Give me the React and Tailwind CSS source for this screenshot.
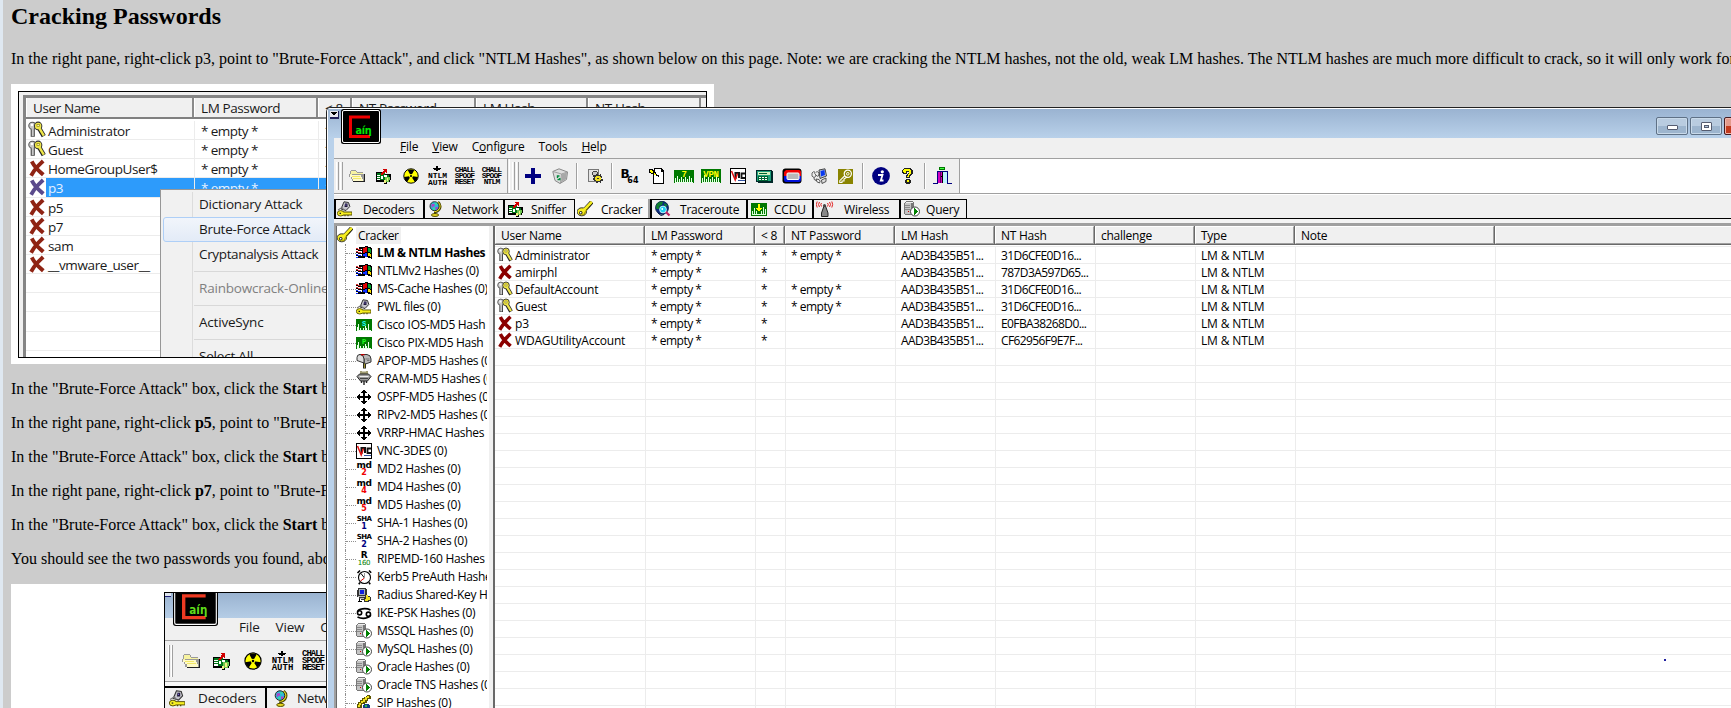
import React from "react";

const UI = "font-['Open_Sans','Noto_Sans',sans-serif] text-[12px] tracking-[-0.3px] text-black whitespace-nowrap";

function Svg({ s = 16, w, h, vb = "0 0 16 16", cls = "", children }) {
  return (
    <svg width={w || s} height={h || s} viewBox={vb} shapeRendering="crispEdges" className={"shrink-0 block " + cls}>
      {children}
    </svg>
  );
}
function Soft({ s = 16, w, h, vb = "0 0 16 16", children }) {
  return (
    <svg width={w || s} height={h || s} viewBox={vb} fill="none" className="shrink-0 block">
      {children}
    </svg>
  );
}

/* ---------- icons ---------- */
const Key = ({ s }) => (
  <Soft s={s}>
    <path d="M8 8.500L14.800 1" stroke="#111" strokeWidth="4.200" />
    <ellipse cx="4.800" cy="10.800" rx="4.700" ry="4" fill="#f6ee20" stroke="#333" strokeWidth="1" />
    <path d="M6.500 9.500L14.800 .8" stroke="#f6ee20" strokeWidth="2.600" />
    <path d="M7.500 11.500L12 6.500M5 14Q7.500 13.500 8.500 11" stroke="#a89a00" strokeWidth="1" />
    <rect x="2.500" y="10.500" width="2.500" height="2.500" rx="1" fill="#fff" stroke="#111" />
  </Soft>
);
const Keys = ({ s }) => (
  <Soft s={s}>
    <path d="M4.200 6.500V14" stroke="#333" strokeWidth="3.600" />
    <circle cx="3.800" cy="4.200" r="3.100" fill="#c8c8c8" stroke="#555" strokeWidth=".9" />
    <path d="M4.200 6V13.500" stroke="#c8c8c8" strokeWidth="1.900" />
    <rect x="2.500" y="2.500" width="2" height="2" fill="#fff" />
    <path d="M10 6.500L14 13.500" stroke="#222" strokeWidth="4" />
    <ellipse cx="9" cy="4.400" rx="3.300" ry="3.400" fill="#efe64a" stroke="#333" strokeWidth=".9" />
    <path d="M9.500 5.500L14 13" stroke="#efe64a" strokeWidth="2.200" />
    <rect x="8" y="3" width="2" height="2" fill="#fffbd0" stroke="#8a8000" strokeWidth=".6" />
  </Soft>
);
const Cross = ({ s, c = "#8b0000" }) => (
  <Soft s={s}>
    <path d="M4.200 3.600C6 7 8.500 9.500 12.300 12.900M12.200 3C9 6 6 9 3.600 13.400" stroke={c} strokeWidth="3.500" strokeLinecap="square" />
  </Soft>
);
const Win = () => (
  <Svg>
    <path d="M6 2h3V1h3v1h3v1h1v11h-1v-1h-3v-1H9v1H6z" fill="#000" />
    <path d="M7 3h2V2h2v5H9v1H7z" fill="#e00000" />
    <path d="M12 3h2v1h1v4h-1V7h-2z" fill="#00a030" />
    <path d="M7 9h2V8h2v4H9v-1H7z" fill="#1030ff" />
    <path d="M12 8h2v1h1v3h-1v-1h-2z" fill="#ffe000" />
    <path d="M0 3h2v1H0zM2 4h3v1H2zM0 6h2v1H0zM2 7h3v1H2z" fill="#e03030" />
    <path d="M0 9h2v1H0zM2 10h3v1H2zM0 12h2v1H0z" fill="#1030ff" />
    <path d="M0 4h2v1H0zM2 5h4v1H2zM0 7h2v1H0zM2 8h4v1H2zM0 10h2v1H0zM2 11h4v2H2zM3 2h3v2H3z" fill="#000" />
  </Svg>
);
const Dec = ({ s }) => (
  <Soft s={s}>
    <path d="M7 .8L11.500 1.500L12.800 5.500L9 9.500L4 8z" fill="#c4c4cc" stroke="#333" strokeWidth="1" />
    <path d="M8 2.500h2.500v3.500H7.500z" fill="#201838" />
    <path d="M8.500 3.500h1v1h-1z" fill="#9080ff" />
    <path d="M1 9L5 6.500L7 9" stroke="#777" strokeWidth="1.200" />
    <path d="M6 12.500H15" stroke="#554e00" strokeWidth="4" />
    <ellipse cx="3.700" cy="12.300" rx="3.400" ry="2.700" fill="#f6ee20" stroke="#554e00" strokeWidth=".9" />
    <path d="M5.500 12.500H14.500" stroke="#f6ee20" strokeWidth="2.200" />
    <path d="M8 14v1.200M11 14v1.200" stroke="#554e00" strokeWidth="1.200" />
    <path d="M2.500 11.700h1.500v1.200H2.500z" fill="#222" />
  </Soft>
);
const Globe = ({ s }) => (
  <Soft s={s}>
    <path d="M11 1Q14.500 4 12.500 8Q10.500 11 7 11" stroke="#4a4400" strokeWidth="2.600" />
    <path d="M11 1.500Q14 4.500 12.300 7.500Q10.500 10.500 7 10.800" stroke="#e8d820" strokeWidth="1.300" />
    <circle cx="7.500" cy="5.200" r="4.500" fill="#2fb8d8" stroke="#222" strokeWidth=".9" />
    <path d="M4.500 3h3v2.500h-2v1h-1zM8.500 6h2.500l-1 2.500H8.500z" fill="#b040c8" />
    <path d="M8 1.800h2v2H8zM6 6.500h2v2.500H6z" fill="#38d8a0" />
    <path d="M8 11v2" stroke="#4a4400" strokeWidth="2" />
    <ellipse cx="8" cy="14" rx="3.600" ry="1.500" fill="#e8d820" stroke="#4a4400" strokeWidth=".9" />
  </Soft>
);
const Card = ({ s }) => (
  <Svg s={s}>
    <path d="M0 4h9v2h6v6h-1v2h-3v2H8v-2H0z" fill="#000" />
    <path d="M1 5h8v2h4v5H1z" fill="#007818" />
    <path d="M1 7h3v1H1zM1 9h3v1H1zM1 11h3v1H1zM5 8h2v3H5zM8 7h3v2H8z" fill="#fff" />
    <path d="M9 9h5v3h-1v2h-3v-2H9z" fill="#70c850" />
    <path d="M8 12h2v3H8zM11 10h1v3h-1z" fill="#f0f080" />
    <path d="M4 6h1V5h1V4h1V3h1V2H7V1h4v4h-1V4H9v1H8v1H7v1H5z" fill="#d00000" />
  </Svg>
);
const Folder = ({ s }) => (
  <Svg s={s}>
    <path d="M2 2h5v1h1v1h6v2h1v7H3v-2H2V9H0V6h1V3h1z" fill="#9a9a9a" />
    <path d="M2 3h5v1h1v1h6v1H3v1H1V6h1z" fill="#f7f3a0" />
    <path d="M1 7h11v2h1v2h1v2H4v-2H3V9H1z" fill="#fffbc8" />
    <path d="M15 6h1v8H4v-1h11z" fill="#222" />
    <path d="M3 8h8v1H3zM4 10h8v1H4z" fill="#f3e868" />
  </Svg>
);
const Nuke = ({ s }) => (
  <Soft s={s}>
    <circle cx="8" cy="8" r="7.200" fill="#ff0" stroke="#000" strokeWidth="1" />
    <path d="M8 8L4.800 2.200A7 7 0 0 1 11.200 2.200zM8 8L1 9A7 7 0 0 0 4.300 13.800zM8 8L15 9A7 7 0 0 1 11.700 13.800z" fill="#000" />
    <circle cx="8" cy="8" r="2" fill="#ff0" />
    <circle cx="8" cy="8" r="1.100" fill="#000" />
  </Soft>
);
const Chart = ({ t, c = "#7fff00", w = 16, h = 12 }) => (
  <svg width={w} height={h} viewBox="0 0 20 14" preserveAspectRatio="none" className="block shrink-0">
    <g shapeRendering="crispEdges">
      <path d="M0 0h20v14H0z" fill="#007800" />
      <path d="M1 9h1v4H1zM3 6h1v7H3zM5 10h1v3H5zM7 8h1v5H7zM9 10h1v3H9zM11 8h1v5h-1zM13 10h1v3h-1zM15 6h1v7h-1zM17 9h1v4h-1zM1 12.500h18v1H1z" fill="#e8ffe8" />
    </g>
    <text x="10" y="8" textAnchor="middle" fontSize="9" fontWeight="700" fontFamily="Liberation Mono, monospace" fill={c}>{t}</text>
  </svg>
);
const CcduIcon = () => (
  <Svg w={16} h={13} vb="0 0 16 13">
    <path d="M0 0h16v13H0z" fill="#007800" />
    <path d="M1 8h1v4H1zM3 5h1v7H3zM5 8h1v4H5zM10 8h1v4h-1zM12 4h1v8h-1zM14 6h1v6h-1zM1 11h14v1H1z" fill="#d8ffd8" />
    <path d="M7 1h2v4h2v1h-1v1H9v1H7V7H6V6H5V5h2z" fill="#ff0" />
  </Svg>
);
const Mailbox = () => (
  <Soft>
    <path d="M8.500 9.500V15.500" stroke="#222" strokeWidth="3" />
    <path d="M8.500 9.500V15" stroke="#9a9030" strokeWidth="1.200" />
    <path d="M3.500 1.500H11Q15 2 15 6V9L9.500 11L8 9.500V6Q7.500 2.500 3.500 1.500z" fill="#b8b8b8" stroke="#222" strokeWidth=".9" />
    <path d="M1 7.500V4.500Q1 1.500 4 1.500Q8 2 8 6V10z" fill="#dcdcdc" stroke="#222" strokeWidth=".9" />
    <path d="M5 1h3.500v1.300H5z" fill="#c00000" />
    <path d="M9.500 6h4M11 7.500h2.500" stroke="#777" />
  </Soft>
);
const Cram = () => (
  <Soft>
    <path d="M5 0V3M7 .5V3M9 .5V3M11 0V3" stroke="#554e00" strokeWidth="1.100" />
    <path d="M3.500 3H12.500L15 5.500L11.500 10H4.500L1 5.500z" fill="#9a9a9a" stroke="#222" strokeWidth="1" />
    <path d="M3.500 5.500H12.500" stroke="#eee" />
    <path d="M4 7.500H12" stroke="#444" />
    <path d="M5.500 10V12M10.500 10V12M8 10V14" stroke="#222" strokeWidth="1.400" />
  </Soft>
);
const Move = () => (
  <Svg>
    <path d="M7 1h2v1h1v1h1v1H9v3h3V5h1v1h1v1h1v2h-1v1h-1v1h-1V9H9v3h2v1h-1v1H9v1H7v-1H6v-1H5v-1h2V9H4v2H3v-1H2V9H1V7h1V6h1V5h1v2h3V4H5V3h1V2h1z" fill="#000" />
  </Svg>
);
const Vnc = ({ s }) => (
  <Soft s={s}>
    <rect x=".5" y=".5" width="15" height="15" fill="#fff" stroke="#000" />
    <path d="M5.500 11V5H9V10" stroke="#111" strokeWidth="2" />
    <path d="M15 5.500H11.500V10H15" stroke="#111" strokeWidth="1.800" />
    <path d="M1.500 3L5.200 12L7.500 5.500" stroke="#e01010" strokeWidth="1.500" />
    <path d="M8 12.500H15" stroke="#3050a0" strokeWidth="1" />
  </Soft>
);
const Clock = () => (
  <Soft>
    <circle cx="8.500" cy="8.500" r="6" fill="#fff" stroke="#000" strokeWidth="1.100" />
    <path d="M1.500 4L4 1.500M13 1.500l2.200 2.200M4 13.500L2.800 15.200M13 13.500l1.200 1.700" stroke="#000" strokeWidth="1.600" />
    <path d="M8.500 9L5 4.500" stroke="#000" />
    <path d="M8.500 9L4.500 12" stroke="#e00000" />
    <path d="M8.500 9V4" stroke="#999" />
  </Soft>
);
const Radius = () => (
  <Svg>
    <path d="M2 1h8v1h1v7h3v1h1v4h-2v1H8v-2H5v-1H3v-2H1V3h1z" fill="#333" />
    <path d="M3 2h6v6H3z" fill="#a8b0b8" />
    <path d="M4 3h4v4H4z" fill="#1020e0" />
    <path d="M2 9h7v1H2zM4 11h4v1H4z" fill="#bbb" />
    <path d="M10 8h2v2h2v3h-2v1H9v-2h1z" fill="#f0e020" />
    <path d="M3 12h1v2H3zM2 14h4v1H2z" fill="#000" />
  </Svg>
);
const Ike = () => (
  <Soft>
    <circle cx="3.600" cy="7.800" r="2.100" stroke="#000" strokeWidth="1.600" />
    <circle cx="12.400" cy="9.200" r="2.100" stroke="#000" strokeWidth="1.600" />
    <path d="M1.500 7C2 3.500 10 2.800 14.500 5" stroke="#000" strokeWidth="1.700" />
    <path d="M14.500 10C14 13.500 6 14.200 1.500 12" stroke="#000" strokeWidth="1.700" />
  </Soft>
);
const Server = () => (
  <Svg>
    <path d="M2 0h7v1h1v13H1v-1H0V2h1V1h1z" fill="#777" />
    <path d="M1 2h6v11H1z" fill="#c4c4c4" />
    <path d="M2 1h7v1H2z" fill="#eee" />
    <path d="M1 4h5v1H1zM1 6h5v1H1zM1 8h5v1H1z" fill="#888" />
    <path d="M4 10h1v1H4z" fill="#c00" />
    <circle cx="11" cy="10.500" r="4.500" fill="#fff" stroke="#333" strokeWidth=".9" shapeRendering="auto" />
    <path d="M10 7h1v1h1v1h1v1h1v1h-1v1h-1v1h-1v1h-1z" fill="#008000" />
  </Svg>
);
const Sip = () => (
  <Svg>
    <path d="M11 0h3v1h1v3h-3v2h-1v2H9v1H6v4H5v1H2v-1H1V9h1V7h2V5h2V3h2V2h2V1h1z" fill="#5c5400" />
    <path d="M11 1h2v2h-2v2H9v2H7v1H5v2H4v2H2v-2h1V8h2V6h2V4h2V2h2z" fill="#f0e020" />
    <path d="M8 9h5v1h1v4h-1v2H8v-2H7v-4h1z" fill="#104080" />
    <path d="M9 10h2v2H9z" fill="#30c050" />
  </Svg>
);
const Plus = () => (
  <Svg><path d="M6 0h4v6h6v4h-6v6H6v-6H0V6h6z" fill="#000080" /></Svg>
);
const Recycle = () => (
  <Soft>
    <path d="M.8 3.500L7 .8L15.500 4L14.500 11.500L8 15.500L3 12.500z" fill="#dedede" stroke="#888" strokeWidth="1" />
    <path d="M1 3.500L9.500 6L15.500 4M9.500 6L8.500 15" stroke="#999" strokeWidth=".9" />
    <path d="M9.800 6.300L15 4.500L14 11L9 14.500z" fill="#a8a8a8" />
    <path d="M7.500 8H5.500V10M5.500 11.500H7.800V10" stroke="#008a3c" strokeWidth="1.400" />
  </Soft>
);
const GearDoc = () => (
  <Svg>
    <path d="M1 1h11v13H1z" fill="#777" />
    <path d="M2 2h9v11H2z" fill="#e4e4e4" />
    <path d="M6 3h4v1h1v3h-1v1H6V7H5V4h1z" fill="#444" />
    <path d="M6 4h4v3H6z" fill="#c8c8c8" />
    <path d="M9 6h2v1h2V6h1v2h1v2h-1v1h2v2h-2v2h-1v-1h-2v1H9v-2H7v-1H6v-2h1V9H6V7h3z" fill="#333" />
    <path d="M9 8h4v1h1v3h-1v1H9v-1H8V9h1z" fill="#f0e020" />
    <path d="M10 10h2v1h-2z" fill="#333" />
  </Svg>
);
const KeyDoc = () => (
  <Svg>
    <path d="M5 0h8v1h1v1h1v14H4V6h1z" fill="#000" />
    <path d="M6 1h6v3h2v11H5V7h1z" fill="#fff" />
    <path d="M0 1h4v1h1v2h2v2h1v1h2v2H9V8H7V7H5V6H2V5H0z" fill="#000" />
    <path d="M1 2h2v1h1v2h2v1h1v1H5V5H2V4H1z" fill="#ff0" />
  </Svg>
);
const Calc = () => (
  <Svg h={13} w={17} vb="0 0 17 13">
    <path d="M0 0h16v1h1v12H2v-1H0z" fill="#002828" />
    <path d="M1 1h14v10H1z" fill="#1fa07c" />
    <path d="M2 2h12v3H2z" fill="#d8f0c0" />
    <path d="M3 3h8v1H3zM2 6h10v5H2z" fill="#063" />
    <path d="M3 7h2v1H3zM6 7h2v1H6zM9 7h2v1H9zM3 9h2v1H3zM6 9h2v1H6zM9 9h2v1H9z" fill="#fff" />
  </Svg>
);
const Tv = () => (
  <Soft w={20} h={16} vb="0 0 20 16">
    <rect x=".5" y=".5" width="19" height="15" rx="3" fill="#000" />
    <path d="M4 2h13a2 2 0 0 1 2 2v4H2V4z" fill="#f00000" />
    <path d="M2 8h17v4a2 2 0 0 1-2 2H4a2 2 0 0 1-2-2z" fill="#0010d8" />
    <rect x="5" y="5" width="12" height="6.500" rx="1" fill="#b8b8b8" stroke="#fff" />
  </Soft>
);
const PcIcon = () => (
  <Soft>
    <path d="M8 2L14 .8L15.500 8L9 10.500z" fill="#c0c8d8" stroke="#333" strokeWidth=".9" />
    <path d="M9.500 3L13.500 2L14 7L10 8.500z" fill="#0838f0" />
    <path d="M10.500 12L15 10V13.500L11 15.500z" fill="#ddd" stroke="#444" strokeWidth=".9" />
    <path d="M1 5Q0 9 3 9.500Q5 9 5 7Q3 6 4 4Q2 3 1 5zM5 4Q7 3 8 5L7.500 8Q6 9 5 7" fill="#eee" stroke="#555" strokeWidth=".9" />
    <path d="M3 9.500Q2.500 12 5 12.500M5 11Q5 14.500 8.500 15Q10 13 8 11.500z" fill="#eee" stroke="#444" strokeWidth=".9" />
  </Soft>
);
const OliveKey = () => (
  <Soft s={15} vb="0 0 15 15">
    <path d="M0 0h15v15H0z" fill="#8a8400" />
    <circle cx="9.800" cy="4.800" r="3.600" stroke="#fff" strokeWidth="1.200" />
    <circle cx="9.800" cy="4.800" r="1.300" stroke="#fff" strokeWidth="1" />
    <path d="M7 6.500L1.800 11.700V13.500H4V12H6V10L9 8" stroke="#fff" strokeWidth="1.100" />
  </Soft>
);
const Info = () => (
  <Soft w={18} h={18} vb="0 0 18 18">
    <circle cx="9" cy="9" r="8.900" fill="#000080" />
    <circle cx="10.300" cy="4.800" r="1.600" fill="#fff" />
    <path d="M6 8h4.500L8.800 13.500H11.500" stroke="#fff" strokeWidth="1.800" />
  </Soft>
);
const Help = () => (
  <Svg w={11} h={16} vb="0 0 11 16">
    <path d="M2 0h7v1h1v1h1v4h-1v1H9v1H8v2H4V7h1V6h1V5h1V4H5v2H1V5H0V2h1V1h1zM4 11h4v1h1v3H8v1H4v-1H3v-3h1z" fill="#222" />
    <path d="M2 1h6v1h1v4H8v1H7v2H5V8h1V6h1V3H4v2H2V4H1V2h1zM5 12h2v2H5z" fill="#ff0" />
  </Svg>
);
const Door = () => (
  <Svg w={19} h={18} vb="0 0 19 18">
    <path d="M6 0h6v3H6z" fill="#007800" />
    <path d="M7 1h4v1H7z" fill="#40ff40" />
    <path d="M4 4h11v12h4v1h-5V5H5v12H0v-1h4z" fill="#000080" />
    <path d="M5 5h4v11H5z" fill="#d000c0" />
    <path d="M7 5h1v11H7z" fill="#600060" />
    <path d="M9 5h5v11H9z" fill="#bdf4ff" />
    <path d="M9 5h1v11H9zM8 9h1v1H8z" fill="#000" />
  </Svg>
);
const Trace = () => (
  <Soft>
    <circle cx="7" cy="6.800" r="6.500" fill="#0a2a80" stroke="#001840" strokeWidth=".8" />
    <path d="M3 1.800Q6 0 8 1L7 4L4.500 5L4 8L1.500 8Q0 5 3 1.800zM9.500 2L12.500 4L11 6L9 4z" fill="#108030" />
    <path d="M10 10L14.500 14.500" stroke="#c02060" strokeWidth="2.200" />
    <circle cx="8" cy="8.500" r="3.400" fill="#20d0f0" stroke="#e8ffff" strokeWidth=".8" />
    <path d="M6.500 7h1.500v2H6.500z" fill="#e8ffff" />
    <path d="M3 12l3 2.500l3-1" stroke="#001840" />
  </Soft>
);
const Antenna = () => (
  <Soft w={18} h={17} vb="0 0 18 17">
    <path d="M8 5h1.500l2.500 7v3.500H5.500V12z" fill="#888" stroke="#222" strokeWidth="1" />
    <circle cx="8.500" cy="4.500" r="1.500" fill="#444" />
    <path d="M5.500 2Q4 3.500 5.500 5.500M11.500 2Q13 3.500 11.500 5.500M3.500 1Q1.500 3.500 3.500 6M13.500 1Q15.500 3.500 13.500 6M1.200 .5Q-.5 3.500 1.200 6.500M15.800 .5Q17.500 3.500 15.800 6.500" stroke="#e02020" strokeWidth="1" />
  </Soft>
);
const tiny = "font-['Liberation_Mono',monospace] font-bold text-center text-black whitespace-nowrap";
const Ntlm = ({ big }) => (
  <div className={"flex flex-col items-center " + tiny + (big ? " text-[9px] leading-[7px]" : " text-[8px] leading-[6.500px] tracking-[0px]")}>
    <svg width="8" height="5" viewBox="0 0 8 5" shapeRendering="crispEdges" className="mb-[2px]"><path d="M3 0h2v2h3v1H7v1H5v1H3V4H1V3H0V2h3z" /></svg>
    <span>NTLM</span>
    <span>AUTH</span>
  </div>
);
const Chall = ({ last = "RESET", big }) => (
  <div className={"flex flex-col items-center " + tiny + (big ? " text-[9px] leading-[7px] tracking-[-1px]" : " text-[8px] leading-[6px] tracking-[-0.9px]")}>
    <span>CHALL</span>
    <span>SPOOF</span>
    <span>{last}</span>
  </div>
);
const B64 = () => (
  <div className="font-['DejaVu_Sans',sans-serif] font-bold text-black flex items-start pt-[1px]">
    <span className="text-[12px] leading-[11px]">B</span>
    <span className="text-[8px] leading-[8px] pt-[8px] -ml-[2px] tracking-normal">64</span>
  </div>
);
const Two = ({ a, b, c }) => (
  <div className="w-4 h-4 shrink-0 flex flex-col items-center font-['DejaVu_Sans',sans-serif] font-bold">
    <span className="text-[9px] leading-[8px] text-black tracking-[-0.3px]">{a}</span>
    <span className={"text-[8px] leading-[8px] " + c}>{b}</span>
  </div>
);
const Sha = ({ n }) => (
  <div className="w-4 h-4 shrink-0 flex flex-col items-center font-['DejaVu_Sans',sans-serif] font-bold">
    <span className="text-[7px] leading-[8px] text-black tracking-[-0.6px]">SHA</span>
    <span className="text-[8px] leading-[8px] text-[#000080]">{n}</span>
  </div>
);

const Logo = ({ w, h, red = "#f00000", green = "#00e800" }) => (
  <svg width={w} height={h} viewBox="0 0 40 35" className="block" preserveAspectRatio="none">
    <rect x="0" y="0" width="40" height="35" rx="2.500" fill="#000" />
    <rect x="1.500" y="1.500" width="37" height="32" rx="1.500" fill="#000" stroke="#fff" strokeWidth="1" />
    <path d="M29 8H9.500v19.500H29" fill="none" stroke={red} strokeWidth="3" />
    <text x="14.500" y="24.500" fontFamily="DejaVu Sans, sans-serif" fontWeight="700" fontSize="10.500" textLength="16" lengthAdjust="spacingAndGlyphs" fill={green}>aíη</text>
  </svg>
);

/* ---------- article behind the window ---------- */
const backRows = [
  ["k", "Administrator"], ["k", "Guest"], ["x", "HomeGroupUser$"], ["s", "p3"],
  ["x", "p5"], ["x", "p7"], ["x", "sam"], ["x", "__vmware_user__"],
  ["", ""], ["", ""], ["", ""], ["", ""], ["", ""],
];
const UI2 = "font-['Open_Sans','Noto_Sans',sans-serif] text-[13.500px] tracking-[-0.4px] text-[#1a1a1a] whitespace-nowrap";
const headCell = "h-full shrink-0 bg-[#f0f0f0] border-l border-l-white border-r-2 border-r-[#8a8a8a] pl-[6px] pt-[2px] flex items-center";

function MenuItem({ children, cls = "" }) {
  return <div className={"h-[25px] shrink-0 flex items-center pl-[38px] " + cls}>{children}</div>;
}
const MenuSep = () => <div className="h-[9px] shrink-0 flex items-center pl-[33px]"><div className="h-px w-full bg-[#d8d8d8]" /></div>;

function FirstFigure() {
  return (
    <div className="ml-[8px] w-[703px] h-[280px] bg-white pl-[7px] pt-[7px]">
      <div className="relative w-[689px] h-[267px] border border-black bg-[#f0f0f0] overflow-hidden pl-[4px] pt-[3px]">
        <div className="bg-white border-l-[3px] border-t-[3px] border-[#858585] w-[690px] h-[270px]">
          <div className={"flex h-[21px] bg-[#f0f0f0] border-b-2 border-[#808080] " + UI2}>
            <div className={headCell + " w-[168px]"}>User Name</div>
            <div className={headCell + " w-[124px]"}>LM Password</div>
            <div className={headCell + " w-[34px]"}>{"< 8"}</div>
            <div className={headCell + " w-[124px]"}>NT Password</div>
            <div className={headCell + " w-[112px]"}>LM Hash</div>
            <div className={headCell + " w-[113px]"}>NT Hash</div>
          </div>
          <div className="h-[2px]" />
          {backRows.map(([k, n], i) => (
            <div key={i} className={"flex h-[19.15px] border-b border-[#ececec] " + UI2}>
              <div className="w-[20px] flex items-center pl-[2px]">
                {k === "k" && <Keys s={18} />}
                {k === "x" && <Cross s={18} c="#8f2313" />}
                {k === "s" && <Cross s={18} c="#5a4a8c" />}
              </div>
              <div className={"flex flex-1 items-center " + (k === "s" ? "bg-[#2d9bfb] text-[#e4f1ff]" : "")}>
                <div className="w-[148px] pl-[2px] pt-[2px]">{n}</div>
                <div className="w-[124px] h-full border-l border-[#ececec] pl-[6px] pt-[2px] flex items-center tracking-[-0.55px]">{n ? "* empty *" : ""}</div>
                <div className="h-full border-l border-[#ececec] pl-[6px] pt-[2px] flex items-center">{n ? "*" : ""}</div>
              </div>
            </div>
          ))}
        </div>
        <div className={"absolute left-[141px] top-[97px] w-[260px] h-[180px] bg-[#f1f1f1] border border-[#979797] pt-[2px] flex flex-col !tracking-[-0.2px] " + UI2}>
          <div className="absolute left-[31px] top-[2px] w-px h-[176px] bg-[#dcdcdc]" />
          <MenuItem>Dictionary Attack</MenuItem>
          <MenuItem cls="relative ml-[2px] !pl-[35px] !tracking-[-0.3px] border border-[#aecff7] rounded-[3px] bg-linear-to-b from-[#f1f5fb] to-[#e3ebf7]">Brute-Force Attack</MenuItem>
          <MenuItem cls="!tracking-[-0.35px]">Cryptanalysis Attack</MenuItem>
          <MenuSep />
          <MenuItem cls="text-[#808080]">Rainbowcrack-Online</MenuItem>
          <MenuSep />
          <MenuItem>ActiveSync</MenuItem>
          <MenuSep />
          <MenuItem>Select All</MenuItem>
        </div>
      </div>
    </div>
  );
}

function SecondFigure() {
  return (
    <div className="ml-[8px] w-[703px] h-[124px] bg-white pl-[153px] pt-[8px] overflow-hidden">
      <div className="relative overflow-hidden border-l border-t border-black h-[116px] bg-[#f0f0f0] flex flex-col">
        <div className="h-[25px] shrink-0 bg-linear-to-b from-[#9ab3d0] to-[#b5cde6]">
          <div className="w-[6px] h-[4px] bg-[#dfe6ef] border-b border-[#20207a]" />
        </div>
        <div className="absolute left-[8px] top-[-6px]"><Logo w={45} h={39} red="#ee3a22" green="#5fdc1a" /></div>
        <div className={"h-[22px] shrink-0 flex items-center pb-[3px] gap-[16px] pl-[74px] !text-[13.500px] !tracking-[-0.2px] " + UI2}>
          <span>File</span><span>View</span><span>Con</span>
        </div>
        <div className="h-[41px] shrink-0 border-t border-[#a0a0a0] flex items-center pl-[3px]">
          <div className="w-[2px] h-[32px] border-l border-white bg-[#a0a0a0] mr-[1px]" />
          <div className="w-[2px] h-[32px] border-l border-white bg-[#a0a0a0] mr-[5px]" />
          <div className="w-[26px] flex justify-center"><Folder s={18} /></div>
          <div className="w-[35px] flex justify-center"><Card s={18} /></div>
          <div className="w-[27px] flex justify-center"><Nuke s={18} /></div>
          <div className="w-[33px] flex justify-center"><Ntlm big /></div>
          <div className="w-[28px] flex justify-center"><Chall big /></div>
        </div>
        <div className="h-[5px] shrink-0 border-t border-[#a0a0a0] bg-[#f8f8f8]" />
        <div className={"h-[24px] shrink-0 flex border-t-2 border-black !text-[13.500px] " + UI2}>
          <div className="w-[102px] flex items-center gap-[12px] pl-[4px] pb-[1px] !tracking-[-0.15px] border-r-2 border-black"><Dec s={17} />Decoders</div>
          <div className="flex items-center gap-[8px] pl-[5px] pb-[1px]"><Globe s={17} />Netw</div>
        </div>
      </div>
    </div>
  );
}

function Article() {
  const p = "ml-[8px] h-[18px] leading-[18px] mb-[16px] whitespace-nowrap";
  return (
    <div className="h-[708px] w-full overflow-hidden bg-[#ccc] border-l-[3px] border-[#dfe8f1] font-['Liberation_Serif','Times_New_Roman',serif] text-[16px] text-black">
      <h2 className="ml-[8px] mt-[2px] h-[28px] leading-[28px] text-[24px] font-bold mb-[20px]">Cracking Passwords</h2>
      <p className={p}>In the right pane, right-click p3, point to "Brute-Force Attack", and click "NTLM Hashes", as shown below on this page. Note: we are cracking the NTLM hashes, not the old, weak LM hashes. The NTLM hashes are much more difficult to crack, so it will only work for</p>
      <FirstFigure />
      <div className="h-[16px]" />
      <p className={p}>In the "Brute-Force Attack" box, click the <b>Start</b> b</p>
      <p className={p}>In the right pane, right-click <b>p5</b>, point to "Brute-F</p>
      <p className={p}>In the "Brute-Force Attack" box, click the <b>Start</b> b</p>
      <p className={p}>In the right pane, right-click <b>p7</b>, point to "Brute-F</p>
      <p className={p}>In the "Brute-Force Attack" box, click the <b>Start</b> b</p>
      <p className={p}>You should see the two passwords you found, abo</p>
      <SecondFigure />
    </div>
  );
}

/* ---------- application window ---------- */
const Slot = ({ children }) => <div className="w-[27px] shrink-0 flex justify-center items-center">{children}</div>;
const Sep = () => <div className="w-[8px] shrink-0 flex justify-center"><div className="w-[2px] h-[26px] bg-[#a0a0a0] border-r border-white" /></div>;
const Grip = () => (
  <div className="flex gap-[1px] shrink-0">
    <div className="w-[3px] h-[28px] border-l border-white border-r border-r-[#a0a0a0]" />
    <div className="w-[3px] h-[28px] border-l border-white border-r border-r-[#a0a0a0]" />
  </div>
);

function Toolbar() {
  return (
    <div className="h-[34px] shrink-0 flex bg-white">
      <div className="w-[626px] shrink-0 flex items-center bg-[#f0f0f0] border-r border-[#a0a0a0] pl-[2px]">
        <Grip />
        <Slot><Folder /></Slot><Slot><Card /></Slot><Slot><Nuke /></Slot>
        <Slot><Ntlm /></Slot><Slot><Chall /></Slot><Slot><Chall last="NTLM" /></Slot>
        <div className="w-[3px] h-[34px] ml-[2px] mr-[2px] border-r border-white border-l border-l-[#a0a0a0]" />
        <Grip />
        <Slot><Plus /></Slot><Slot><Recycle /></Slot>
        <Sep />
        <Slot><GearDoc /></Slot>
        <Sep />
        <Slot><B64 /></Slot><Slot><KeyDoc /></Slot>
        <Slot><Chart t="7" c="#ff0" w={20} h={13} /></Slot>
        <Slot><Chart t="VPN" c="#ff0" w={20} h={14} /></Slot>
        <Slot><Vnc /></Slot><Slot><Calc /></Slot><Slot><Tv /></Slot><Slot><PcIcon /></Slot><Slot><OliveKey /></Slot>
        <Sep />
        <Slot><Info /></Slot><Slot><Help /></Slot>
        <Sep />
        <Slot><Door /></Slot>
      </div>
    </div>
  );
}

const tabs = [
  ["Decoders", <Dec />, "w-[90px]", "gap-[10px] pl-[1px]"],
  ["Network", <Globe />, "w-[80px]", "gap-[9px] pl-[2px]"],
  ["Sniffer", <Card />, "w-[71px]", "gap-[7px] pl-[3px]"],
  ["Cracker", <Key />, "w-[75px]", "gap-[8px] pl-[2px]"],
  ["Traceroute", <Trace />, "w-[97px]", "gap-[9px] pl-[3px]"],
  ["CCDU", <CcduIcon />, "w-[66px]", "gap-[7px] pl-[3px]"],
  ["Wireless", <Antenna />, "w-[87px]", "gap-[10px] pl-[2px]"],
  ["Query", <Server />, "w-[67px]", "gap-[6px] pl-[3px]"],
];

function Tabs() {
  return (
    <div className="h-[24px] shrink-0 pt-[4px] flex bg-[#f0f0f0] border-b border-black">
      {tabs.map(([t, icon, w, inner]) => (
        <div
          key={t}
          className={
            "h-[19px] shrink-0 flex items-center " + w + " " + inner +
            (t === "Cracker" ? " bg-[#f8f8f8] border-r-2 border-r-[#a0a0a0]" : " border-t border-black border-r " + (t === "Traceroute" || t === "Decoders" ? "border-l-2" : "border-l"))
          }
        >
          {icon}
          <span className="pt-[2px] tracking-[-0.2px]">{t}</span>
        </div>
      ))}
    </div>
  );
}

const tree = [
  [<Win />, "LM & NTLM Hashes"], [<Win />, "NTLMv2 Hashes (0)"], [<Win />, "MS-Cache Hashes (0)"],
  [<Dec />, "PWL files (0)"],
  [<Chart t="S" c="#20ffff" />, "Cisco IOS-MD5 Hash"], [<Chart t="P" c="#20ff20" />, "Cisco PIX-MD5 Hash"],
  [<Mailbox />, "APOP-MD5 Hashes (0)"], [<Cram />, "CRAM-MD5 Hashes (0)"],
  [<Move />, "OSPF-MD5 Hashes (0)"], [<Move />, "RIPv2-MD5 Hashes (0)"], [<Move />, "VRRP-HMAC Hashes"],
  [<Vnc />, "VNC-3DES (0)"],
  [<Two a="md" b="2" c="text-[#f00000]" />, "MD2 Hashes (0)"],
  [<Two a="md" b="4" c="text-[#f00000]" />, "MD4 Hashes (0)"],
  [<Two a="md" b="5" c="text-[#f00000]" />, "MD5 Hashes (0)"],
  [<Sha n="1" />, "SHA-1 Hashes (0)"], [<Sha n="2" />, "SHA-2 Hashes (0)"],
  [<Two a="R" b="160" c="!text-[7px] !font-normal text-[#008000]" />, "RIPEMD-160 Hashes"],
  [<Clock />, "Kerb5 PreAuth Hashe"], [<Radius />, "Radius Shared-Key H"], [<Ike />, "IKE-PSK Hashes (0)"],
  [<Server />, "MSSQL Hashes (0)"], [<Server />, "MySQL Hashes (0)"], [<Server />, "Oracle Hashes (0)"],
  [<Server />, "Oracle TNS Hashes (0)"], [<Sip />, "SIP Hashes (0)"],
];

function Tree() {
  return (
    <div className="w-[150px] shrink-0 bg-white overflow-hidden">
      <div className="h-[18px] flex items-center">
        <Key />
        <span className="ml-[3px] h-[17px] leading-[17px] px-[2px] bg-[#f0f0f0]">Cracker</span>
      </div>
      {tree.map(([icon, label], i) => (
        <div key={label} className="h-[18px] flex items-center">
          <div className="ml-[8px] w-[11px] h-[18px] shrink-0 border-l border-dotted border-[#909090] flex items-center">
            <div className="w-full border-t border-dotted border-[#909090]" />
          </div>
          <div className="w-[16px] shrink-0">{icon}</div>
          <span className={"ml-[5px] " + (i === 0 ? "font-bold tracking-[-0.4px]" : "tracking-[-0.3px]")}>{label}</span>
        </div>
      ))}
    </div>
  );
}

const cols = [
  ["User Name", "w-[150px]", "tracking-[-0.2px]"], ["LM Password", "w-[110px]", "tracking-[-0.5px]"], ["< 8", "w-[30px]", ""],
  ["NT Password", "w-[110px]", "tracking-[-0.5px]"],
  ["LM Hash", "w-[100px]", "tracking-[-0.55px]"], ["NT Hash", "w-[100px]", "tracking-[-0.6px]"], ["challenge", "w-[100px]", ""],
  ["Type", "w-[100px]", "tracking-[-0.15px]"],
  ["Note", "w-[200px]", ""], ["", "w-[240px]", ""],
];
const E = "* empty *", L = "AAD3B435B51...", T = "LM & NTLM";
const rows = [
  [true, "Administrator", E, "*", E, L, "31D6CFE0D16...", "", T],
  [false, "amirphl", E, "*", "", L, "787D3A597D65...", "", T],
  [true, "DefaultAccount", E, "*", E, L, "31D6CFE0D16...", "", T],
  [true, "Guest", E, "*", E, L, "31D6CFE0D16...", "", T],
  [false, "p3", E, "*", "", L, "E0FBA38268D0...", "", T],
  [false, "WDAGUtilityAccount", E, "*", "", L, "CF62956F9E7F...", "", T],
];
for (let i = 0; i < 22; i++) rows.push([]);

function Table() {
  return (
    <div className="flex-1 bg-white overflow-hidden">
      <div className="flex h-[19px] w-[1240px] border-b border-[#696969] tracking-[-0.25px]">
        {cols.map(([t, w], i) => (
          <div key={i} className={"shrink-0 h-full flex border-r border-r-[#696969] " + w}>
            <div className="flex-1 flex items-center bg-[#f0f0f0] border border-white border-r-[#a0a0a0] border-b-[#a0a0a0] pl-[5px] pt-[2px]">{t}</div>
          </div>
        ))}
      </div>
      <div className="h-[2px] border-b border-[#ececec]" />
      {rows.map((r, i) => (
        <div key={i} className="flex h-[17px] w-[1240px] border-b border-[#ececec]">
          {cols.map(([, w, tr], j) => (
            <div key={j} className={"shrink-0 h-full leading-[17px] flex items-center " + w + " " + tr + (j ? " border-l border-[#ececec] pl-[5px]" : " pl-[2px]")}>
              {j === 0 && r.length > 0 && <span className="mr-[2px]">{r[0] ? <Keys /> : <Cross />}</span>}
              {r[j + 1] || ""}
            </div>
          ))}
        </div>
      ))}
    </div>
  );
}

function TitleBar() {
  const b = "h-[18px] shrink-0 rounded-[2px] border border-[#5f7186] shadow-[inset_0_0_0_1px_#c9daea] flex items-center justify-center bg-linear-to-b from-[#b9cce0] from-50% to-[#9db5ce] to-50%";
  return (
    <div className="h-[29px] shrink-0 flex items-start">
      <div className="ml-[2px] mt-[2px] w-[9px] h-[8px] bg-[#e8e8f0] border-b-2 border-r border-[#20205a] flex items-start justify-center">
        <svg width="6" height="5" viewBox="0 0 6 5" shapeRendering="crispEdges"><path d="M0 1h6v1H5v1H4v1H2V3H1V2H0z" /></svg>
      </div>
      <div className="flex-1" />
      <div className="flex gap-[2px] mt-[8px] h-[18px] w-[75px] overflow-hidden">
        <div className={b + " w-[32px]"}><div className="w-[11px] h-[5px] rounded-[1px] bg-white border border-[#555c70] mt-[3px]" /></div>
        <div className={b + " w-[32px]"}><div className="w-[11px] h-[9px] rounded-[1px] bg-white border border-[#555c70] flex items-center justify-center"><div className="w-[5px] h-[3px] border border-[#555c70] bg-[#b0c4da]" /></div></div>
        <div className="w-[32px] h-[18px] shrink-0 rounded-[2px] border border-[#431c22] bg-linear-to-b from-[#e39a8c] from-50% to-[#c23a1e] to-50% shadow-[inset_0_0_0_1px_#f0b8ac]" />
      </div>
    </div>
  );
}

function AppWindow() {
  return (
    <div className={"absolute left-[326px] top-[107px] w-[1405px] h-[601px] overflow-hidden rounded-tl-[5px] border-l border-t border-[#222] " + UI}>
      <div className="h-full border-l border-t border-white flex flex-col bg-[#b9d1ea] bg-linear-to-b from-[#9ab3d1] to-[#b9d1ea] to-[29px] pl-0">
        <TitleBar />
        <div className="flex-1 min-h-0 ml-[6px] flex flex-col bg-[#f0f0f0]">
          <div className="h-[20px] shrink-0 flex items-center pb-[2px] pl-[66px] gap-[14px] text-[12px] tracking-[-0.2px]">
            <span><u>F</u>ile</span><span><u>V</u>iew</span><span>C<u>o</u>nfigure</span><span>Tools</span><span><u>H</u>elp</span>
          </div>
          <div className="h-[1px] shrink-0 bg-[#a0a0a0]" />
          <Toolbar />
          <div className="h-[1px] shrink-0 bg-[#a0a0a0]" />
          <div className="h-[1px] shrink-0 bg-white" />
          <Tabs />
          <div className="h-[4px] shrink-0 bg-[#f4f4f4]" />
          <div className="flex-1 min-h-0 flex border-t-[3px] border-[#a0a0a0] border-l-2">
            <div className="flex border-l border-[#696969]">
              <Tree />
            </div>
            <div className="w-[6px] shrink-0 bg-[#f0f0f0] border-l-2 border-white" />
            <div className="flex-1 min-w-0 flex border-l-2 border-[#696969]">
              <Table />
            </div>
          </div>
        </div>
      </div>
      <div className="absolute left-[14px] top-[1px]"><Logo w={40} h={35} /></div>
      <div className="absolute left-[1337px] top-[551px] w-[2px] h-[2px] bg-[#2020a0]" />
    </div>
  );
}

export default function App() {
  return (
    <div className="relative w-full h-[708px] overflow-hidden">
      <Article />
      <AppWindow />
    </div>
  );
}
